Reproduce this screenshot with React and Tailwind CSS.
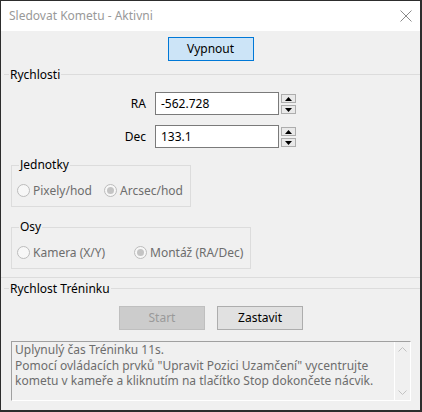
import React from "react";

const font = { fontFamily: '"Noto Sans", "Liberation Sans", sans-serif' };

function Spin() {
  return (
    <div className="ml-[2px] flex w-[15px] flex-col gap-[1px] pt-[2px]">
      <div className="flex h-[9px] items-center justify-center border border-[#adadad] bg-[#e9e9e9]">
        <svg width="7" height="4" viewBox="0 0 7 4"><path d="M0 4 L3.5 0 L7 4 Z" fill="#000" /></svg>
      </div>
      <div className="mt-[1px] flex h-[9px] items-center justify-center border border-[#adadad] bg-[#e9e9e9]">
        <svg width="7" height="4" viewBox="0 0 7 4"><path d="M0 0 L3.5 4 L7 0 Z" fill="#000" /></svg>
      </div>
    </div>
  );
}

function NumRow({ label, value, mt }) {
  return (
    <div className={`flex h-[23px] ${mt}`}>
      <div className="flex w-[145px] items-center justify-end text-[12px] text-black">{label}</div>
      <div className="ml-[9px] flex h-[23px] w-[124px] items-center border border-[#7a7a7a] bg-white pl-[5px] text-[12px] text-black">
        {value}
      </div>
      <Spin />
    </div>
  );
}

function Radio({ checked, label, w }) {
  return (
    <div className={`flex items-center ${w}`}>
      <div className="flex h-[13px] w-[13px] items-center justify-center rounded-full border border-[#bcbcbc] bg-[#f7f7f7]">
        {checked && <div className="h-[7px] w-[7px] rounded-full bg-[#c4c4c4]" />}
      </div>
      <span className="ml-[3px] text-[12px] leading-none text-[#6d6d6d]">{label}</span>
    </div>
  );
}

function GroupBox({ title, w, mt, children }) {
  return (
    <div className={`relative ml-[10px] h-[42px] border border-[#dcdcdc] ${w} ${mt}`}>
      <div className="absolute left-[7px] top-[-9px] bg-[#f0f0f0] px-[1px] text-[12px] leading-[16px] text-black">
        {title}
      </div>
      <div className="flex pl-[5px] pt-[18px]">{children}</div>
    </div>
  );
}

function Header({ title, mt }) {
  return (
    <div className={`flex h-[13px] items-center ${mt}`}>
      <div className="ml-[3px] h-px w-[5px] bg-[#dcdcdc]" />
      <span className="px-[1px] text-[12px] leading-none text-black">{title}</span>
      <div className="h-px flex-1 bg-[#dcdcdc]" />
    </div>
  );
}

export default function App() {
  return (
    <div className="h-[412px] w-[422px] overflow-hidden bg-[#2d2d2d] pl-px pt-px" style={font}>
      <div className="flex h-[409px] w-[419px] flex-col">
        <div className="flex h-[30px] items-center justify-between bg-white pl-[8px] pr-[8px]">
          <span className="text-[12px] text-[#999999]">Sledovat Kometu - Aktivni</span>
          <svg width="12" height="12" viewBox="0 0 12 12" className="mt-[-1px]">
            <path d="M0.5 0.5 L11.5 11.5 M11.5 0.5 L0.5 11.5" stroke="#8a8a8a" strokeWidth="1" />
          </svg>
        </div>
        <div className="flex flex-1 flex-col bg-[#f0f0f0]">
          <div className="mt-[6px] flex justify-center">
            <button className="flex h-[24px] w-[86px] items-center justify-center border border-[#0078d7] bg-[#cce4f7] text-[12px] text-black">
              Vypnout
            </button>
          </div>
          <Header title="Rychlosti" mt="mt-[7px]" />
          <NumRow label="RA" value="-562.728" mt="mt-[11px]" />
          <NumRow label="Dec" value="133.1" mt="mt-[10px]" />
          <GroupBox title="Jednotky" w="w-[180px]" mt="mt-[17px]">
            <Radio label="Pixely/hod" w="w-[87px]" />
            <Radio label="Arcsec/hod" checked />
          </GroupBox>
          <GroupBox title="Osy" w="w-[240px]" mt="mt-[20px]">
            <Radio label="Kamera (X/Y)" w="w-[117px]" />
            <Radio label="Montáž (RA/Dec)" checked />
          </GroupBox>
          <div className="mt-[8px] h-px bg-[#dcdcdc]" />
          <Header title="Rychlost Tréninku" mt="mt-[4px]" />
          <div className="mt-[11px] flex">
            <button className="ml-[118px] flex h-[24px] w-[86px] items-center justify-center border border-[#bfbfbf] bg-[#cccccc] text-[12px] text-[#9a9a9a]">
              Start
            </button>
            <button className="ml-[12px] flex h-[24px] w-[86px] items-center justify-center border border-[#adadad] bg-[#e1e1e1] text-[12px] text-black">
              Zastavit
            </button>
          </div>
          <div className="ml-[10px] mt-[11px] flex h-[60px] w-[400px] border-b border-l border-r border-t border-b-white border-l-[#a0a0a0] border-r-white border-t-[#a0a0a0] bg-[#f0f0f0]">
            <div className="flex-1 pl-[3px] text-[12px] leading-[15.5px] text-[#6d6d6d]">
              <div>Uplynulý čas Tréninku 11s.</div>
              <div>Pomocí ovládacích prvků "Upravit Pozici Uzamčení" vycentrujte</div>
              <div>kometu v kameře a kliknutím na tlačítko Stop dokončete nácvik.</div>
            </div>
            <div className="flex w-[16px] flex-col items-center justify-between border-l border-white py-[5px]">
              <svg width="9" height="5" viewBox="0 0 9 5"><path d="M0.5 4.5 L4.5 0.5 L8.5 4.5" stroke="#c2c2c2" fill="none" /></svg>
              <svg width="9" height="5" viewBox="0 0 9 5"><path d="M0.5 0.5 L4.5 4.5 L8.5 0.5" stroke="#c2c2c2" fill="none" /></svg>
            </div>
          </div>
        </div>
      </div>
    </div>
  );
}
